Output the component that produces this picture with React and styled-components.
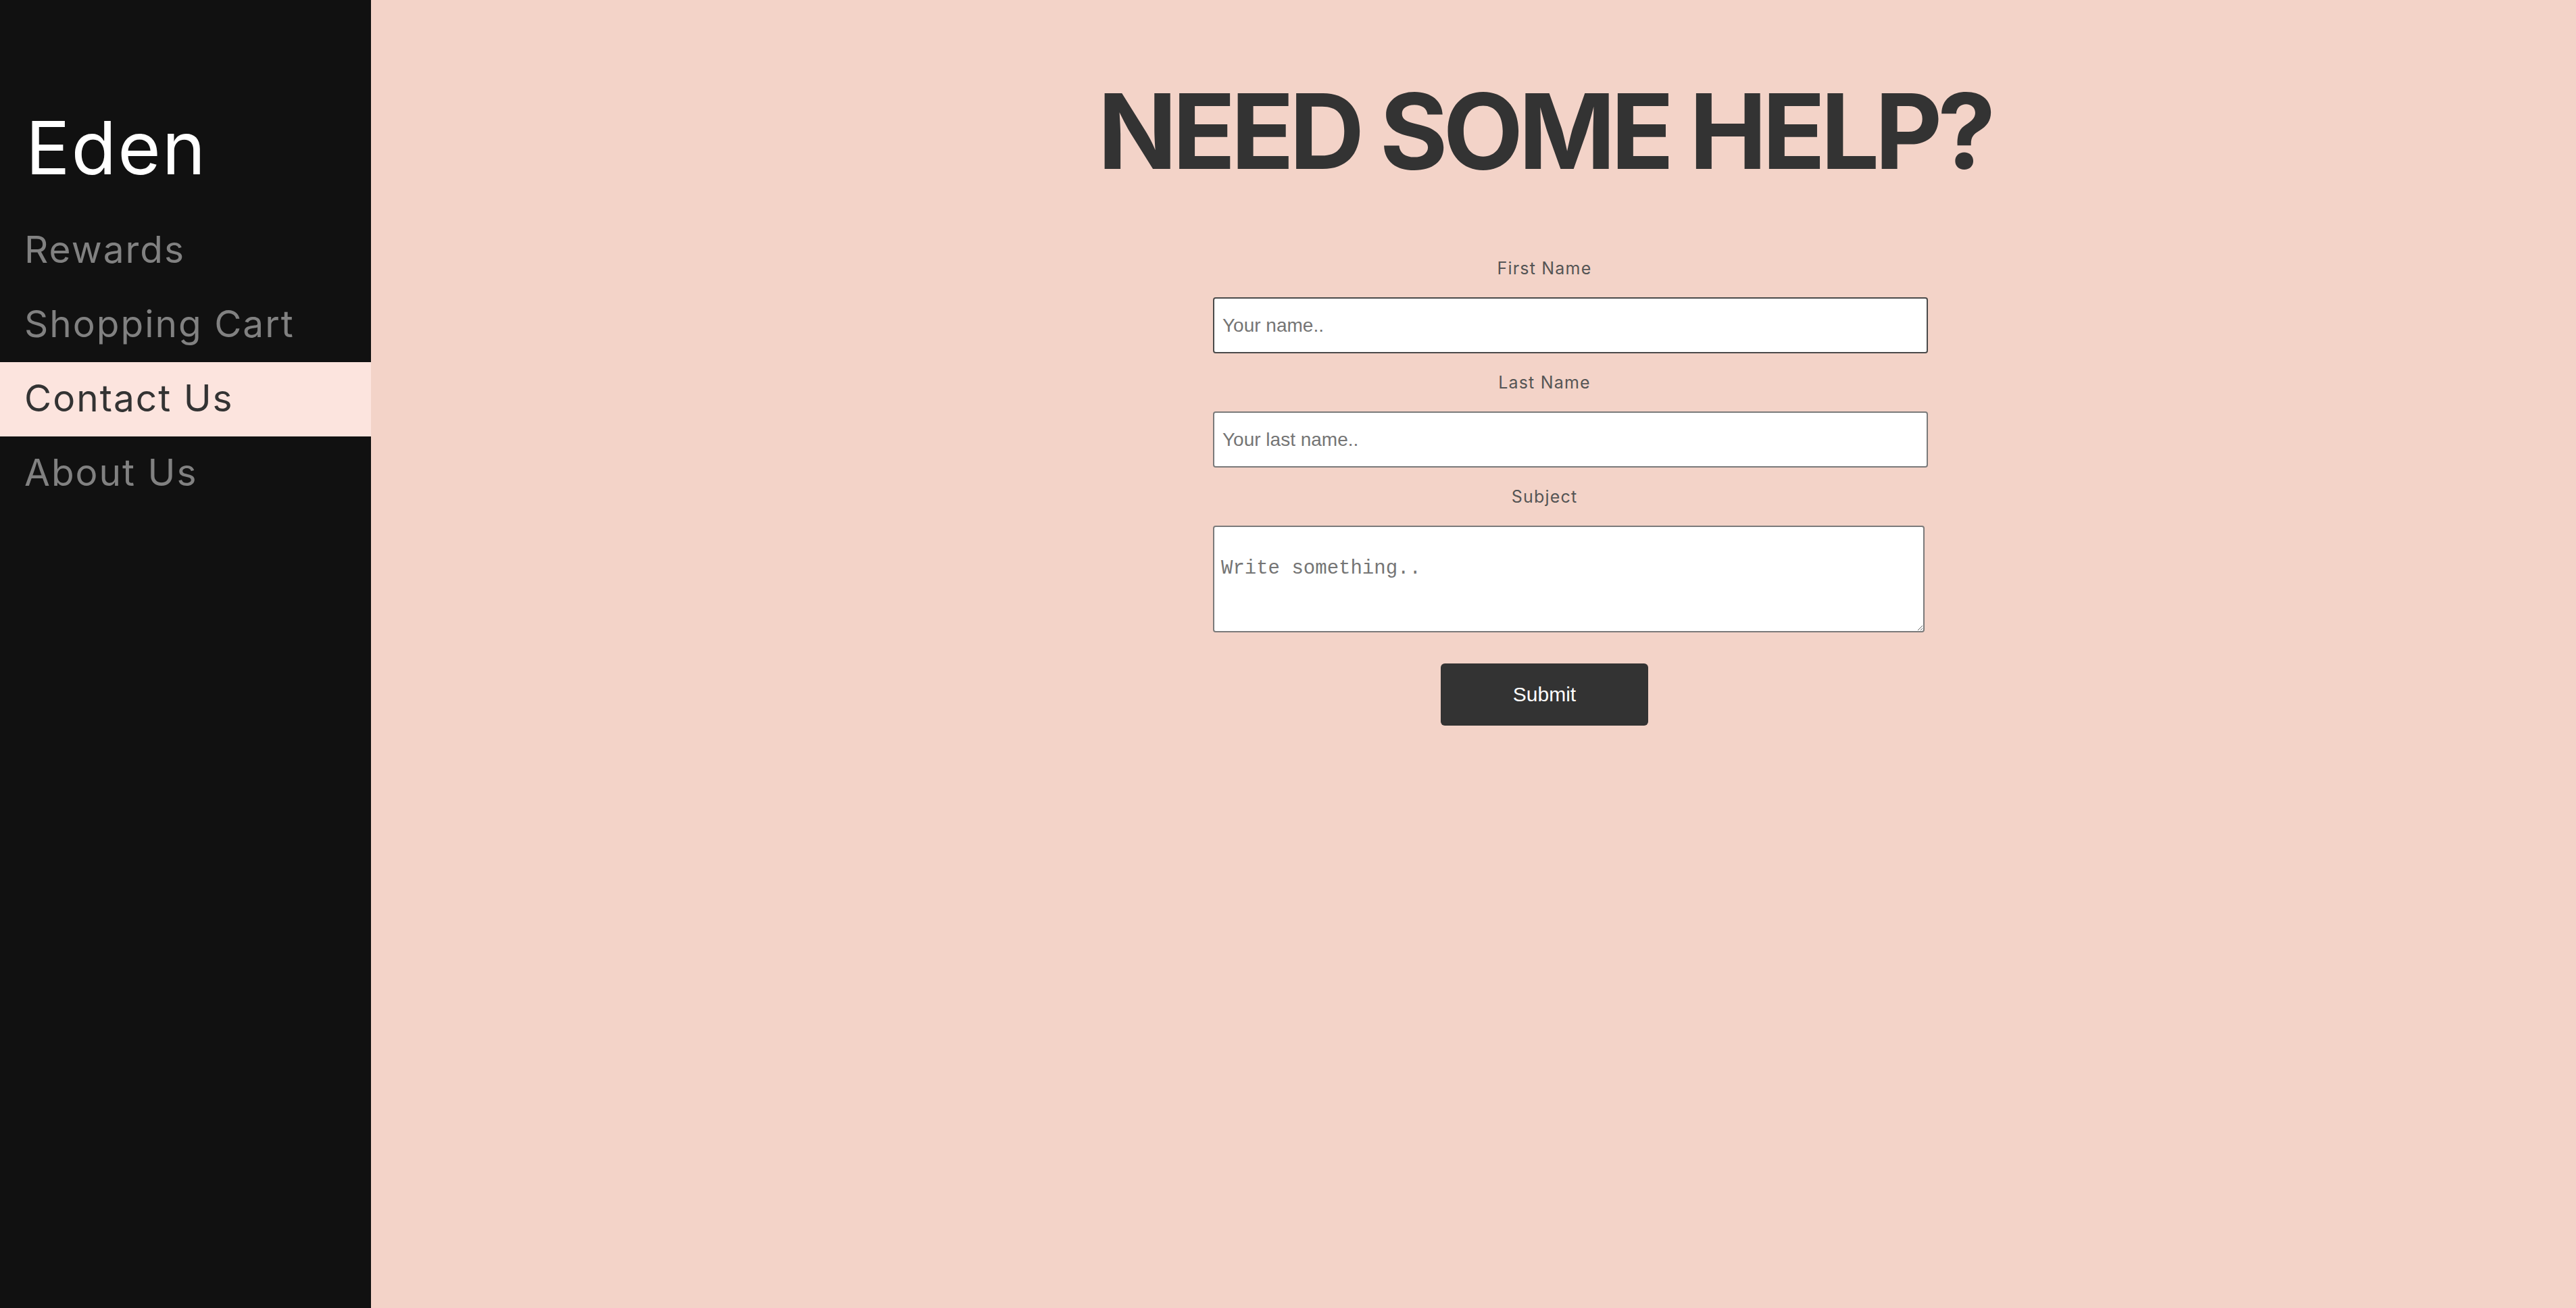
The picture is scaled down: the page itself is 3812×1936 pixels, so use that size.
import React from 'react';
import styled, { createGlobalStyle, css } from 'styled-components';

const GlobalStyle = createGlobalStyle`
  html, body {
    margin: 0;
    padding: 0;
  }

  body {
    background: #f3d3c8;
    font-family: Inter, 'Noto Sans', sans-serif;
  }
`;

const Layout = styled.div`
  display: flex;
  min-height: 100vh;
`;

const Sidebar = styled.nav`
  width: 549px;
  flex-shrink: 0;
  background: #111111;
  display: flex;
  flex-direction: column;
`;

const Brand = styled.h1`
  margin: 164px 0 43px;
  padding-left: 38px;
  font-size: 109px;
  line-height: 1;
  font-weight: 400;
  letter-spacing: 2px;
  color: #ffffff;
`;

const NavLink = styled.a`
  display: block;
  height: 110px;
  line-height: 106px;
  padding-left: 36px;
  font-size: 55px;
  letter-spacing: 2px;
  color: #818181;
  text-decoration: none;

  ${({ $active }) =>
    $active &&
    css`
      background: #fce4de;
      color: #333333;
    `}
`;

const Main = styled.main`
  flex: 1;
  display: flex;
  flex-direction: column;
  align-items: center;
  padding-left: 210px;
`;

const Title = styled.h2`
  margin: 117px 0 83px;
  font-size: 154px;
  line-height: 1;
  font-weight: 700;
  letter-spacing: -7px;
  color: #333333;
`;

const Form = styled.form`
  width: 981px;
  display: flex;
  flex-direction: column;
  align-items: flex-start;
`;

const Label = styled.label`
  align-self: stretch;
  text-align: center;
  height: 86px;
  line-height: 86px;
  font-size: 25px;
  letter-spacing: 1.2px;
  color: #555555;
`;

const TextInput = styled.input`
  box-sizing: border-box;
  width: 1058px;
  height: 83px;
  padding: 0 12px;
  border: 2px solid ${({ $dark }) => ($dark ? '#4a4a4a' : '#7a7a7a')};
  border-radius: 4px;
  background: #ffffff;
  font: 28px 'Liberation Sans', Arial, sans-serif;
  color: #333333;
  outline: none;

  &::placeholder {
    color: #757575;
  }
`;

const TextArea = styled.textarea`
  box-sizing: border-box;
  width: 1053px;
  height: 158px;
  padding: 45px 10px 10px;
  border: 2px solid #7a7a7a;
  border-radius: 4px;
  background: #ffffff;
  font: 29px 'Liberation Mono', monospace;
  color: #333333;
  outline: none;

  &::placeholder {
    color: #757575;
  }
`;

const SubmitButton = styled.button`
  align-self: center;
  margin-top: 46px;
  width: 307px;
  height: 92px;
  border: none;
  border-radius: 6px;
  background: #333333;
  color: #ffffff;
  font: 30px 'Liberation Sans', Arial, sans-serif;
  cursor: pointer;
`;

const links = ['Rewards', 'Shopping Cart', 'Contact Us', 'About Us'];

const App = () => {
  return (
    <>
      <GlobalStyle />
      <Layout>
        <Sidebar>
          <Brand>Eden</Brand>
          {links.map((link) => (
            <NavLink key={link} href="#" $active={link === 'Contact Us'}>
              {link}
            </NavLink>
          ))}
        </Sidebar>

        <Main>
          <Title>NEED SOME HELP?</Title>
          <Form onSubmit={(e) => e.preventDefault()}>
            <Label htmlFor="fname">First Name</Label>
            <TextInput id="fname" type="text" placeholder="Your name.." $dark />

            <Label htmlFor="lname">Last Name</Label>
            <TextInput id="lname" type="text" placeholder="Your last name.." />

            <Label htmlFor="subject">Subject</Label>
            <TextArea id="subject" placeholder="Write something.." />

            <SubmitButton type="submit">Submit</SubmitButton>
          </Form>
        </Main>
      </Layout>
    </>
  );
};

export default App;
